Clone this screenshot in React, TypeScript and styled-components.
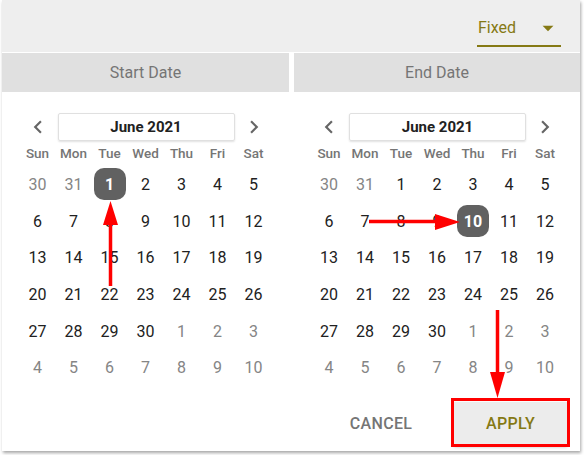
import styled, { createGlobalStyle } from 'styled-components';

const GlobalStyle = createGlobalStyle`
  html, body {
    margin: 0;
    padding: 0;
    background: #ffffff;
    font-family: Roboto, "Liberation Sans", sans-serif;
  }
  * { box-sizing: border-box; }
`;

const Olive = '#857914';
const Grey = '#757575';

const Page = styled.div`
  position: relative;
  width: 584px;
  height: 455px;
  padding-left: 2px;
  overflow: hidden;
`;
const Panel = styled.div`
  width: 578px;
  height: 451px;
  background: #ffffff;
  box-shadow: 1px 2px 3px rgba(0, 0, 0, 0.35);
  display: flex;
  flex-direction: column;
`;
const TopBar = styled.div`
  display: flex;
  justify-content: flex-end;
  height: 52px;
  padding: 0 19px 0 0;
  background: #eeeeee;
`;
const Select = styled.div`
  display: flex;
  align-items: center;
  justify-content: space-between;
  width: 84px;
  height: 47px;
  padding: 10px 0 0 1px;
  border-bottom: 2px solid ${Olive};
  color: ${Olive};
  font-size: 16px;
`;
const Halves = styled.div`
  display: grid;
  grid-template-columns: 287px 286px;
  column-gap: 5px;
`;
const Tab = styled.div`
  height: 39px;
  margin-top: 1px;
  display: flex;
  align-items: center;
  justify-content: center;
  background: #e0e0e0;
  color: ${Grey};
  font-size: 16px;
`;
const Calendar = styled.div`
  padding-top: 21px;
  display: flex;
  flex-direction: column;
  align-items: center;
`;
const Grid = styled.div`
  display: grid;
  grid-template-columns: repeat(7, 36px);
`;
const NavArrow = styled.div`
  display: flex;
  align-items: center;
  justify-content: center;
  height: 28px;
  color: #666666;
`;
const MonthBox = styled.div`
  grid-column: 2 / 7;
  height: 28px;
  margin: 0 1px 0 2px;
  display: flex;
  align-items: center;
  justify-content: center;
  border: 1px solid #e0e0e0;
  border-radius: 2px;
  box-shadow: 0 1px 2px rgba(0, 0, 0, 0.12);
  font-size: 15px;
  font-weight: 700;
  color: #212121;
`;
const WeekDay = styled.div`
  height: 25px;
  padding-bottom: 2px;
  display: flex;
  align-items: center;
  justify-content: center;
  color: ${Grey};
  font-size: 13.5px;
  font-weight: 500;
`;
const DayCell = styled.div`
  height: 36.7px;
  display: flex;
  align-items: center;
  justify-content: center;
`;
const DayNum = styled.span<{ $muted?: boolean; $selected?: boolean }>`
  width: 32px;
  height: 32px;
  display: flex;
  align-items: center;
  justify-content: center;
  border-radius: 10px;
  font-size: 16px;
  color: ${({ $muted, $selected }) => ($selected ? '#ffffff' : $muted ? '#858585' : '#212121')};
  background: ${({ $selected }) => ($selected ? '#616161' : 'transparent')};
  font-weight: ${({ $selected }) => ($selected ? 700 : 400)};
`;
const Footer = styled.div`
  display: flex;
  justify-content: flex-end;
  align-items: center;
  gap: 28px;
  padding: 16px 13px 0 0;
`;
const Button = styled.div<{ $primary?: boolean }>`
  width: ${({ $primary }) => ($primary ? '113px' : '90px')};
  height: 43px;
  display: flex;
  align-items: center;
  justify-content: center;
  font-size: 16px;
  font-weight: 500;
  letter-spacing: 0.3px;
  color: ${({ $primary }) => ($primary ? Olive : Grey)};
  background: ${({ $primary }) => ($primary ? '#ececec' : 'transparent')};
  box-shadow: ${({ $primary }) => ($primary ? '0 2px 3px rgba(0,0,0,0.25)' : 'none')};
`;
const Annotations = styled.svg`
  position: absolute;
  left: 0;
  top: 0;
  pointer-events: none;
`;

const Chevron = ({ dir }: { dir: 'left' | 'right' }) => (
  <svg width="26" height="26" viewBox="0 0 24 24" fill="currentColor">
    {dir === 'left' ? (
      <path d="M15.41 7.41L14 6l-6 6 6 6 1.41-1.41L10.83 12z" />
    ) : (
      <path d="M8.59 16.59L10 18l6-6-6-6-1.41 1.41L13.17 12z" />
    )}
  </svg>
);

const weekDays = ['Sun', 'Mon', 'Tue', 'Wed', 'Thu', 'Fri', 'Sat'];

// June 2021 begins on a Tuesday, grid starts at Sunday May 30
const cells = Array.from({ length: 42 }, (_, i) => {
  if (i < 2) return { day: 30 + i, muted: true };
  if (i < 32) return { day: i - 1, muted: false };
  return { day: i - 31, muted: true };
});

const MonthView = ({ selected }: { selected: number }) => (
  <Calendar>
    <Grid>
      <NavArrow>
        <Chevron dir="left" />
      </NavArrow>
      <MonthBox>June 2021</MonthBox>
      <NavArrow>
        <Chevron dir="right" />
      </NavArrow>
    </Grid>
    <Grid>
      {weekDays.map((d) => (
        <WeekDay key={d}>{d}</WeekDay>
      ))}
      {cells.map((c, i) => (
        <DayCell key={i}>
          <DayNum $muted={c.muted} $selected={!c.muted && c.day === selected}>
            {c.day}
          </DayNum>
        </DayCell>
      ))}
    </Grid>
  </Calendar>
);

const App = () => {
  return (
    <>
      <GlobalStyle />
      <Page>
        <Panel>
          <TopBar>
            <Select>
              <span>Fixed</span>
              <svg width="26" height="26" viewBox="0 0 24 24" fill={Olive}>
                <path d="M7 10l5 5 5-5z" />
              </svg>
            </Select>
          </TopBar>
          <Halves>
            <Tab>Start Date</Tab>
            <Tab>End Date</Tab>
          </Halves>
          <Halves>
            <MonthView selected={1} />
            <MonthView selected={10} />
          </Halves>
          <Footer>
            <Button>CANCEL</Button>
            <Button $primary>APPLY</Button>
          </Footer>
        </Panel>
        <Annotations width="584" height="455" viewBox="0 0 584 455">
          <g fill="#ff0000" stroke="#ff0000">
            <line x1="110.5" y1="286" x2="110.5" y2="222" strokeWidth="3.5" />
            <polygon points="110.5,201 103,225 118,225" stroke="none" />
            <line x1="369" y1="221.5" x2="437" y2="221.5" strokeWidth="3.5" />
            <polygon points="460,222 435,214 435,230" stroke="none" />
            <line x1="497.5" y1="310" x2="497.5" y2="375" strokeWidth="3.5" />
            <polygon points="497.5,398 490,372 505,372" stroke="none" />
          </g>
          <rect x="452.5" y="399.5" width="116" height="46" fill="none" stroke="#ff0000" strokeWidth="3" />
        </Annotations>
      </Page>
    </>
  );
};

export default App;
